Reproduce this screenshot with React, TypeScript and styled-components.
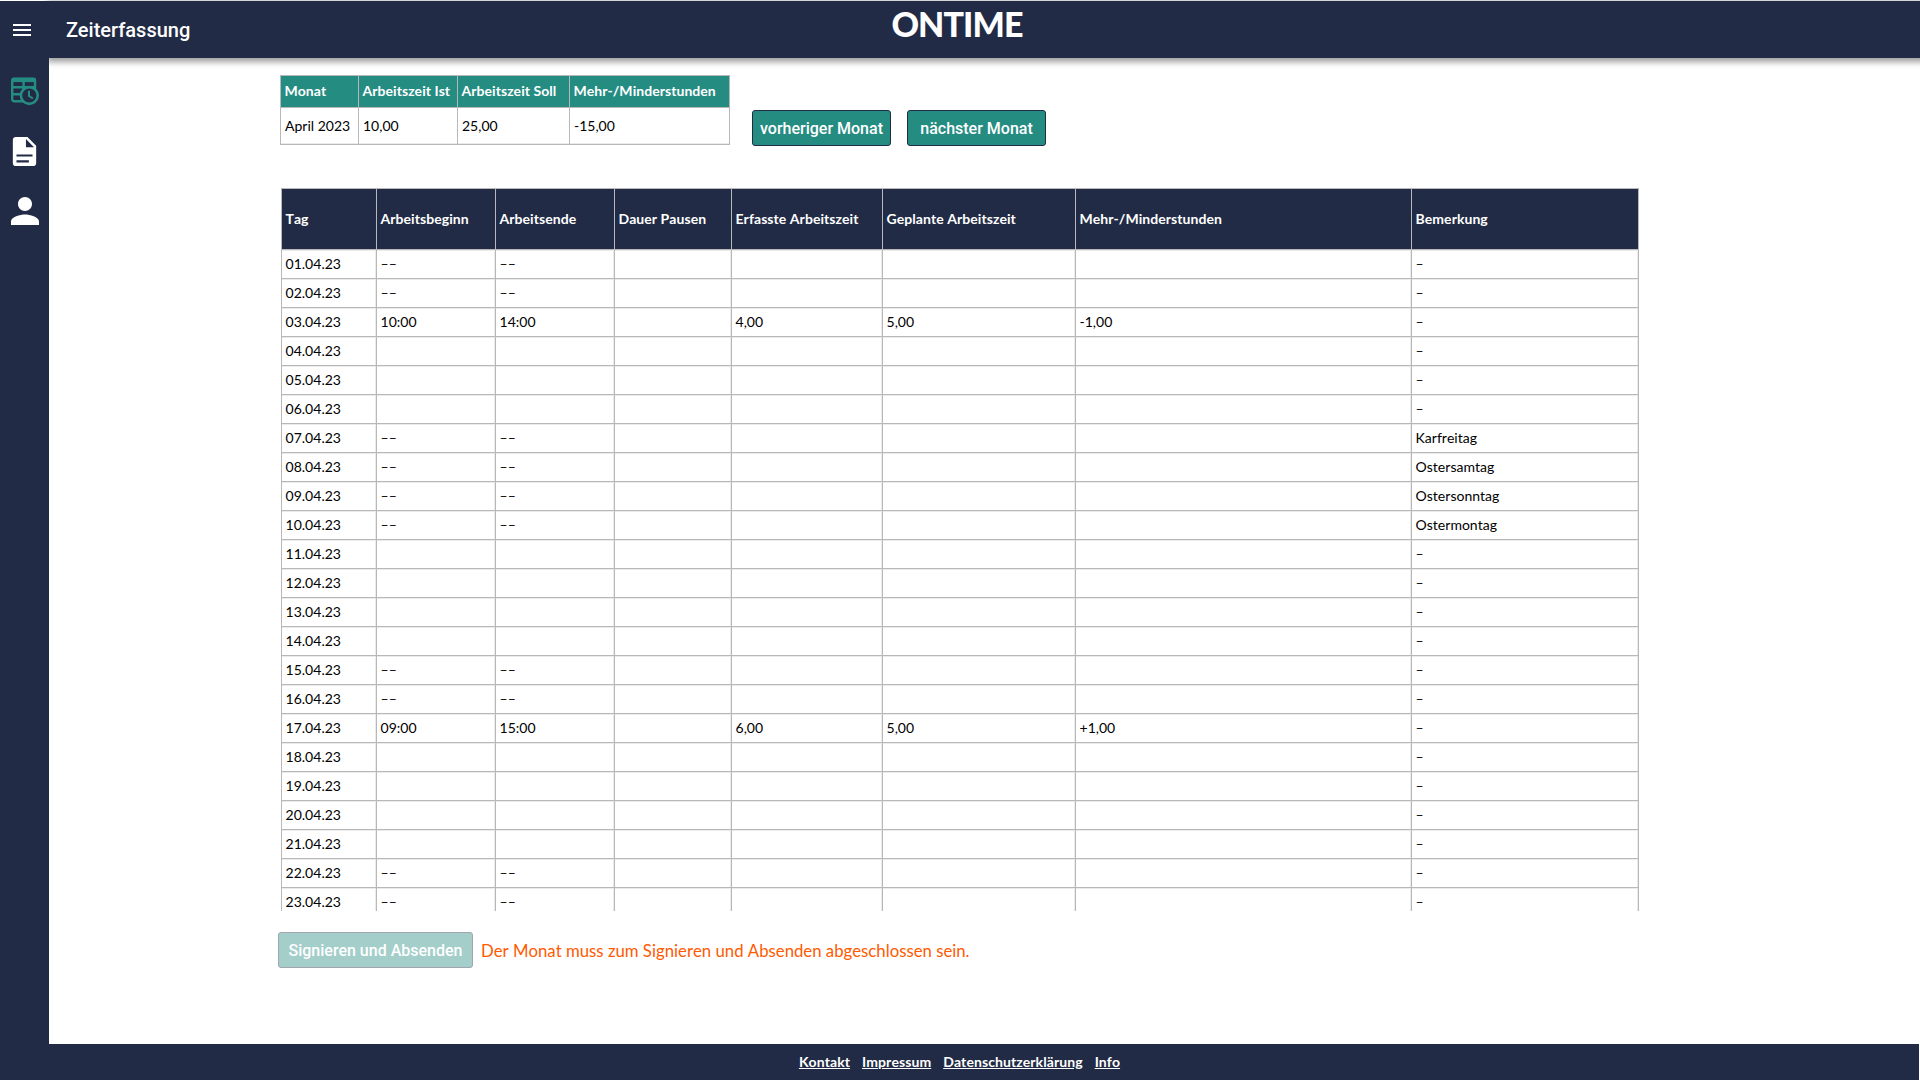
import React from "react";
import styled, { createGlobalStyle } from "styled-components";

const NAVY = "#222b45";
const TEAL = "#258c82";

const GlobalStyle = createGlobalStyle`
  *, *::before, *::after { box-sizing: border-box; }
  body { margin: 0; background: #fff; font-family: Lato, "Liberation Sans", sans-serif; color: #000; overflow: hidden; font-kerning: none; }
`;

const Page = styled.div`
  width: 1920px;
  height: 1080px;
  padding: 1px 1px 0 0;
  display: flex;
  flex-direction: column;
`;

const Header = styled.header`
  height: 57px;
  flex: none;
  display: grid;
  grid-template-columns: 66px 1fr auto 1fr 66px;
  margin-right: -1px;
  background: ${NAVY};
  color: #fff;
  box-shadow: 49px 2px 6px 2px rgba(0, 0, 0, 0.38);
`;

const MenuButton = styled.div`
  padding: 17px 0 0 10px;
  svg { display: block; }
`;

const Title = styled.div`
  font: 500 20px/58px Roboto, sans-serif;
`;

const Logo = styled.div`
  font: 900 34px/46px Lato, sans-serif;
  font-kerning: normal;
  letter-spacing: -0.9px;
  padding-right: 6px;
`;

const Body = styled.div`
  flex: 1;
  min-height: 0;
  display: flex;
`;

const Sidebar = styled.nav`
  width: 49px;
  background: ${NAVY};
  position: relative;
  display: flex;
  flex-direction: column;
  align-items: center;
  padding-top: 15px;
  gap: 25px;
  svg { display: block; flex: none; }
`;

const PersonSlot = styled.div`
  margin-top: -4px;
`;

const Main = styled.main`
  flex: 1;
  padding: 17px 0 0 229px;
`;

const TopRow = styled.div`
  display: flex;
  align-items: flex-start;
  gap: 16px;
`;

const Summary = styled.div`
  display: grid;
  grid-template-columns: 78px 99px 112px 160px;
  grid-template-rows: 32px 37px;
  margin: 0 6px 0 2px;
  border-left: 1px solid #b8b8b8;
  border-top: 1px solid #b8b8b8;
`;

const SummaryCell = styled.div<{ $head?: boolean }>`
  display: flex;
  align-items: center;
  padding: 0 0 ${(p) => (p.$head ? 2 : 1)}px ${(p) => (p.$head ? 3.5 : 4)}px;
  border-right: 1px solid #b8b8b8;
  border-bottom: 1px solid #b8b8b8;
  box-shadow: ${(p) => (p.$head ? "none" : "inset 0 -1px 0 #ebebeb")};
  font-size: 14px;
  font-weight: ${(p) => (p.$head ? 700 : 400)};
  letter-spacing: ${(p) => (p.$head ? 0.05 : 0)}px;
  color: ${(p) => (p.$head ? "#fff" : "#000")};
  background: ${(p) => (p.$head ? TEAL : "#fff")};
  white-space: nowrap;
`;

const Button = styled.button<{ $width: number; $top?: number; $disabled?: boolean }>`
  width: ${(p) => p.$width}px;
  height: 36px;
  margin: ${(p) => p.$top ?? 0}px 0 0;
  padding: 1px 0 0;
  border: 1px solid ${NAVY};
  border-radius: 3px;
  background: ${TEAL};
  color: #fff;
  font: 500 16px/33px Roboto, sans-serif;
  opacity: ${(p) => (p.$disabled ? 0.42 : 1)};
`;

const TableWindow = styled.div`
  width: 1358px;
  height: 723px;
  margin: 42px 0 0 3px;
  overflow: hidden;
`;

const Cell = styled.div`
  display: flex;
  align-items: center;
  padding: 0 0 2px 3.5px;
  border-right: 1px solid #b8b8b8;
  border-bottom: 1px solid #b8b8b8;
  box-shadow: inset 0 1px 0 #ebebeb, inset -1px 0 0 #ebebeb;
  white-space: nowrap;
`;

const Row = styled.div<{ $head?: boolean }>`
  display: grid;
  grid-template-columns: 95px 119px 119px 117px 151px 193px 336px 227px;
  height: ${(p) => (p.$head ? 62 : 29)}px;
  border-left: 1px solid #b8b8b8;
  border-top: ${(p) => (p.$head ? "1px solid #b8b8b8" : "0")};
  color: ${(p) => (p.$head ? "#fff" : "#000")};
  background: ${(p) => (p.$head ? NAVY : "#fff")};
  font-size: 14px;
  font-weight: ${(p) => (p.$head ? 700 : 400)};
  letter-spacing: ${(p) => (p.$head ? 0.06 : 0.02)}px;
  ${Cell} { ${(p) => (p.$head ? "box-shadow: none;" : "")} }
`;

const SignRow = styled.div`
  display: flex;
  align-items: center;
  gap: 8px;
  margin-top: 21px;
`;

const Warning = styled.span`
  font-size: 16.76px;
  color: #ff5a00;
`;

const Footer = styled.footer`
  height: 36px;
  flex: none;
  display: flex;
  justify-content: center;
  gap: 12px;
  background: ${NAVY};
`;

const FooterLink = styled.a`
  color: #fff;
  font-size: 14px;
  font-weight: 700;
  letter-spacing: 0.08px;
  line-height: 36px;
  text-decoration: underline;
`;

const columns = [
  "Tag", "Arbeitsbeginn", "Arbeitsende", "Dauer Pausen",
  "Erfasste Arbeitszeit", "Geplante Arbeitszeit", "Mehr-/Minderstunden", "Bemerkung",
];

const freeDays = [1, 2, 7, 8, 9, 10, 15, 16, 22, 23];
const remarks: Record<number, string> = { 7: "Karfreitag", 8: "Ostersamtag", 9: "Ostersonntag", 10: "Ostermontag" };
const worked: Record<number, string[]> = {
  3: ["10:00", "14:00", "", "4,00", "5,00", "-1,00"],
  17: ["09:00", "15:00", "", "6,00", "5,00", "+1,00"],
};

const rows = Array.from({ length: 23 }, (_, i) => {
  const day = i + 1;
  const blank = freeDays.includes(day) ? "––" : "";
  return [
    `${String(day).padStart(2, "0")}.04.23`,
    ...(worked[day] ?? [blank, blank, "", "", "", ""]),
    remarks[day] ?? "–",
  ];
});

const TimesheetIcon = () => (
  <svg width="36" height="36" viewBox="0 0 36 36" fill="none" stroke={TEAL} strokeWidth="2.4">
    <rect x="5.2" y="5.6" width="22.8" height="22.6" rx="2" />
    <path d="M5 7H28.500" strokeWidth="4.200" />
    <path d="M5 14.200H28M5 21.200H15M16.600 6V16" />
    <circle cx="22.3" cy="22.5" r="8.4" fill={NAVY} strokeWidth="2.600" />
    <path d="M22 17.8V23L25.800 25.400" strokeWidth="2" />
  </svg>
);

export default function App() {
  return (
    <Page>
      <GlobalStyle />
      <Header>
        <MenuButton>
          <svg width="24" height="24" viewBox="0 0 24 24" fill="#fff"><path d="M3 18h18v-2H3v2zm0-5h18v-2H3v2zm0-7v2h18V6H3z" /></svg>
        </MenuButton>
        <Title>Zeiterfassung</Title>
        <Logo>ONTIME</Logo>
      </Header>
      <Body>
        <Sidebar>
          <TimesheetIcon />
          <svg width="35" height="35" viewBox="0 0 24 24" fill="#fff"><path d="M14 2H6c-1.1 0-1.99.9-1.99 2L4 20c0 1.1.89 2 1.99 2H18c1.1 0 2-.9 2-2V8l-6-6zM6.500 14H17.500v1.500H6.500zM6.500 18H15v1.500H6.500zM13 9V3.500L18.500 9H13z" fillRule="evenodd" /></svg>
          <PersonSlot>
            <svg width="42" height="42" viewBox="0 0 24 24" fill="#fff"><path d="M12 12c2.210 0 4-1.790 4-4s-1.790-4-4-4-4 1.790-4 4 1.790 4 4 4zm0 2c-2.670 0-8 1.340-8 4v2h16v-2c0-2.660-5.330-4-8-4z" /></svg>
          </PersonSlot>
        </Sidebar>
        <Main>
          <TopRow>
            <Summary>
              {["Monat", "Arbeitszeit Ist", "Arbeitszeit Soll", "Mehr-/Minderstunden"].map((t) => <SummaryCell $head key={t}>{t}</SummaryCell>)}
              {["April 2023", "10,00", "25,00", "-15,00"].map((t) => <SummaryCell key={t}>{t}</SummaryCell>)}
            </Summary>
            <Button $width={139} $top={35}>vorheriger Monat</Button>
            <Button $width={139} $top={35}>nächster Monat</Button>
          </TopRow>
          <TableWindow>
            <Row $head>{columns.map((c) => <Cell key={c}>{c}</Cell>)}</Row>
            {rows.map((r) => <Row key={r[0]}>{r.map((c, i) => <Cell key={i}>{c}</Cell>)}</Row>)}
          </TableWindow>
          <SignRow>
            <Button $width={195} $disabled>Signieren und Absenden</Button>
            <Warning>Der Monat muss zum Signieren und Absenden abgeschlossen sein.</Warning>
          </SignRow>
        </Main>
      </Body>
      <Footer>
        {["Kontakt", "Impressum", "Datenschutzerklärung", "Info"].map((t) => <FooterLink key={t}>{t}</FooterLink>)}
      </Footer>
    </Page>
  );
}
